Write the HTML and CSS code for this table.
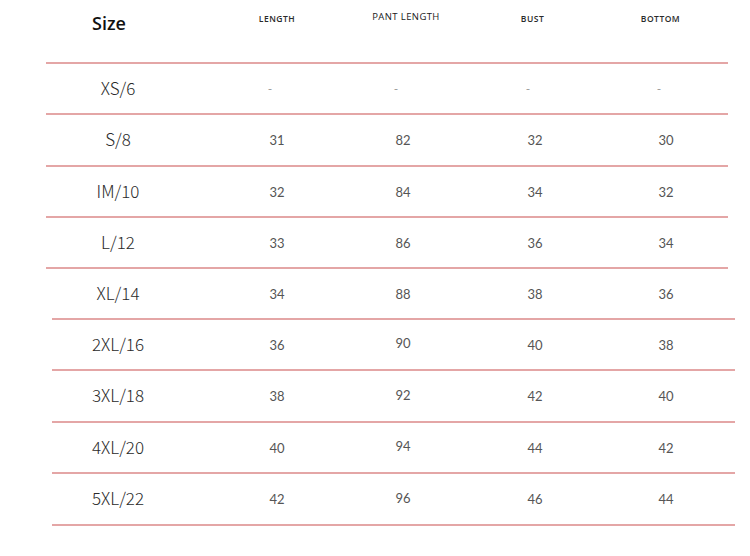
FILE: index.html
```html
<!DOCTYPE html>
<html>
<head>
<meta charset="utf-8">
<link rel="stylesheet" href="styles.css">
</head>
<body>
<div class="chart">
  <div class="head">
    <div class="h-size">Size</div>
    <div class="h-lab h-len">LENGTH</div>
    <div class="h-lab h-pant">PANT LENGTH</div>
    <div class="h-lab h-bust">BUST</div>
    <div class="h-lab h-bot">BOTTOM</div>
  </div>
  <div class="rule"></div>
  <div class="row">
    <div class="sz">XS/6</div><div class="dash">-</div><div class="dash">-</div><div class="dash">-</div><div class="dash">-</div>
  </div>
  <div class="rule"></div>
  <div class="row tall">
    <div class="sz">S/8</div><div class="num">31</div><div class="num">82</div><div class="num">32</div><div class="num">30</div>
  </div>
  <div class="rule"></div>
  <div class="row">
    <div class="sz">IM/10</div><div class="num">32</div><div class="num">84</div><div class="num">34</div><div class="num">32</div>
  </div>
  <div class="rule"></div>
  <div class="row">
    <div class="sz">L/12</div><div class="num">33</div><div class="num">86</div><div class="num">36</div><div class="num">34</div>
  </div>
  <div class="rule"></div>
  <div class="row">
    <div class="sz">XL/14</div><div class="num">34</div><div class="num">88</div><div class="num">38</div><div class="num">36</div>
  </div>
  <div class="rule alt"></div>
  <div class="row">
    <div class="sz">2XL/16</div><div class="num">36</div><div class="num up">90</div><div class="num">40</div><div class="num">38</div>
  </div>
  <div class="rule alt"></div>
  <div class="row tall">
    <div class="sz">3XL/18</div><div class="num">38</div><div class="num up">92</div><div class="num">42</div><div class="num">40</div>
  </div>
  <div class="rule alt"></div>
  <div class="row">
    <div class="sz">4XL/20</div><div class="num">40</div><div class="num up">94</div><div class="num">44</div><div class="num">42</div>
  </div>
  <div class="rule alt"></div>
  <div class="row tall">
    <div class="sz">5XL/22</div><div class="num">42</div><div class="num up">96</div><div class="num">46</div><div class="num">44</div>
  </div>
  <div class="rule alt"></div>
</div>
</body>
</html>
```
FILE: styles.css
```css
html, body {
  margin: 0;
  padding: 0;
  background: #ffffff;
}
.chart {
  width: 750px;
  height: 556px;
  overflow: hidden;
}
.head {
  height: 62px;
  display: grid;
  grid-template-columns: 236px 82px 170px 94px 168px;
  align-items: start;
}
.h-size {
  font-family: "Open Sans", sans-serif;
  font-weight: 600;
  font-size: 18px;
  color: #111;
  text-align: center;
  padding-right: 18px;
  padding-top: 10px;
  line-height: 26px;
}
.h-lab {
  font-family: "Open Sans", sans-serif;
  font-weight: 600;
  font-size: 8.5px;
  letter-spacing: 0.5px;
  color: #2a2a2a;
  text-align: center;
  padding-top: 14px;
  line-height: 10px;
}
.h-pant {
  font-size: 9.5px;
  letter-spacing: 0.4px;
  padding-left: 6px;
  padding-top: 12px;
  font-weight: 500;
  color: #1a1a1a;
}
.h-bust {
  padding-right: 5px;
}
.h-bot {
  padding-right: 11px;
}
.rule {
  height: 2px;
  background: #e4a6a6;
  margin-left: 46px;
  width: 682px;
}
.rule.alt {
  margin-left: 52px;
  width: 683px;
}
.row {
  height: 49px;
  display: grid;
  grid-template-columns: 236px 82px 170px 94px 168px;
  align-items: center;
}
.row.tall {
  height: 50px;
}
.sz {
  font-family: "Noto Sans CJK SC", "DejaVu Sans", sans-serif;
  font-weight: 300;
  font-size: 17px;
  color: #2a2a2a;
  text-align: center;
  padding-bottom: 3px;
}
.num {
  font-family: "Lato", "Noto Sans", sans-serif;
  font-size: 13px;
  color: #555;
  text-align: center;
}
.num.up {
  margin-top: -3px;
}
.dash {
  font-family: "Lato", sans-serif;
  font-size: 12px;
  color: #999;
  text-align: center;
  padding-right: 14px;
}
```
